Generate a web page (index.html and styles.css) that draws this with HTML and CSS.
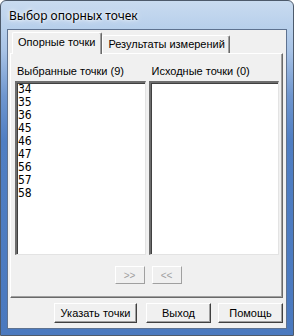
FILE: index.html
```html
<!DOCTYPE html>
<html>
<head>
    <meta charset="UTF-8">
    <title>Выбор опорных точек</title>
    <link rel="stylesheet" href="styles.css">
</head>
<body>
    <div class="window">
        <div class="titlebar">Выбор опорных точек</div>
        <div class="client">
            <div class="tabs">
                <div class="tab active">Опорные точки</div>
                <div class="tab">Результаты измерений</div>
            </div>
            <div class="panel">
                <div class="lists">
                    <div class="list-col left">
                        <div class="list-label">Выбранные точки (9)</div>
                        <div class="listbox">
                            <div class="item">34</div>
                            <div class="item">35</div>
                            <div class="item">36</div>
                            <div class="item">45</div>
                            <div class="item">46</div>
                            <div class="item">47</div>
                            <div class="item">56</div>
                            <div class="item">57</div>
                            <div class="item">58</div>
                        </div>
                    </div>
                    <div class="list-col right">
                        <div class="list-label">Исходные точки (0)</div>
                        <div class="listbox"></div>
                    </div>
                </div>
                <div class="move-buttons">
                    <button class="btn small" disabled>&gt;&gt;</button>
                    <button class="btn small" disabled>&lt;&lt;</button>
                </div>
            </div>
            <div class="actions">
                <button class="btn wide">Указать точки</button>
                <button class="btn">Выход</button>
                <button class="btn">Помощь</button>
            </div>
        </div>
    </div>
</body>
</html>
```

FILE: styles.css
```css
* {
    box-sizing: border-box;
}

body {
    margin: 0;
    background: #ffffff;
    font-family: "Liberation Sans", Arial, sans-serif;
    font-size: 11px;
    color: #000;
}

/* Window frame */
.window {
    width: 294px;
    height: 336px;
    border: 1px solid #4d5a6b;
    border-radius: 6px 6px 0 0;
    background: linear-gradient(to bottom, #c9dbf0 0px, #b7cfeb 28px, #a8c3e6 50px, #6f96cf 95px, #4f7ec3 140px, #4a79bf 100%);
    padding: 0 6px 6px 6px;
    display: flex;
    flex-direction: column;
}

.titlebar {
    height: 28px;
    padding: 6px 0 0 2px;
    font-family: "Noto Sans", "DejaVu Sans", sans-serif;
    font-size: 12px;
    color: #000;
    text-shadow: 0 0 6px #ffffff, 0 0 3px #ffffff;
}

.client {
    flex: 1;
    background: #f0f0f0;
    border: 1px solid #5e7290;
    padding: 2px 3px 0 2px;
    display: flex;
    flex-direction: column;
}

/* Tabs */
.tabs {
    display: flex;
    padding-left: 2px;
    height: 21px;
    align-items: flex-end;
    position: relative;
    z-index: 1;
}

.tab {
    height: 18px;
    padding: 2px 4px 0 5px;
    border-top: 1px solid #fff;
    border-left: 1px solid #fff;
    border-right: 1px solid #696969;
    box-shadow: inset -1px 0 0 #a0a0a0;
    border-radius: 2px 2px 0 0;
    background: #f0f0f0;
    white-space: nowrap;
}

.tab.active {
    height: 21px;
    padding: 3px 6px 0 5px;
    margin-bottom: -1px;
    height: 22px;
    background: #f0f0f0;
}

.panel {
    height: 245px;
    border-top: 1px solid #fff;
    border-left: 1px solid #fff;
    border-right: 1px solid #696969;
    border-bottom: 1px solid #696969;
    box-shadow: inset -1px -1px 0 #a0a0a0;
    padding: 11px 3px 0 4px;
}

.lists {
    display: flex;
    gap: 3px;
}

.list-col.left {
    width: 134px;
}

.list-col.right {
    width: 132px;
}

.list-label {
    height: 16px;
    padding-left: 2px;
    line-height: 13px;
}

.listbox {
    height: 174px;
    background: #fff;
    border-top: 2px solid;
    border-left: 2px solid;
    border-color: #6d6d6d #f0f0f0 #f0f0f0 #6d6d6d;
    border-right: 1px solid #e3e3e3;
    border-bottom: 1px solid #e3e3e3;
    box-shadow: inset 1px 1px 0 #404040;
    padding: 0 0 0 1px;
}

.item {
    height: 13px;
    line-height: 13px;
    font-size: 12px;
    font-family: "DejaVu Sans Condensed", "Liberation Sans Narrow", sans-serif;
}

.move-buttons {
    display: flex;
    justify-content: center;
    gap: 7px;
    margin-top: 11px;
    padding-left: 2px;
}

/* Classic 3D buttons */
.btn {
    font-family: "Liberation Sans", Arial, sans-serif;
    font-size: 11px;
    height: 20px;
    background: #f0f0f0;
    border-top: 1px solid #fff;
    border-left: 1px solid #fff;
    border-right: 1px solid #404040;
    border-bottom: 1px solid #404040;
    box-shadow: inset -1px -1px 0 #a0a0a0;
    padding: 0;
    color: #000;
}

.btn.small {
    width: 30px;
    height: 18px;
    color: #a0a0a0;
    font-size: 10px;
    border-right-color: #a0a0a0;
    border-bottom-color: #a0a0a0;
    box-shadow: none;
}

.actions {
    display: flex;
    justify-content: flex-end;
    gap: 7px;
    padding: 5px 0 0 0;
}

.actions .btn {
    width: 65px;
}

.actions .btn.wide {
    width: 83px;
    margin-right: 2px;
}
```
